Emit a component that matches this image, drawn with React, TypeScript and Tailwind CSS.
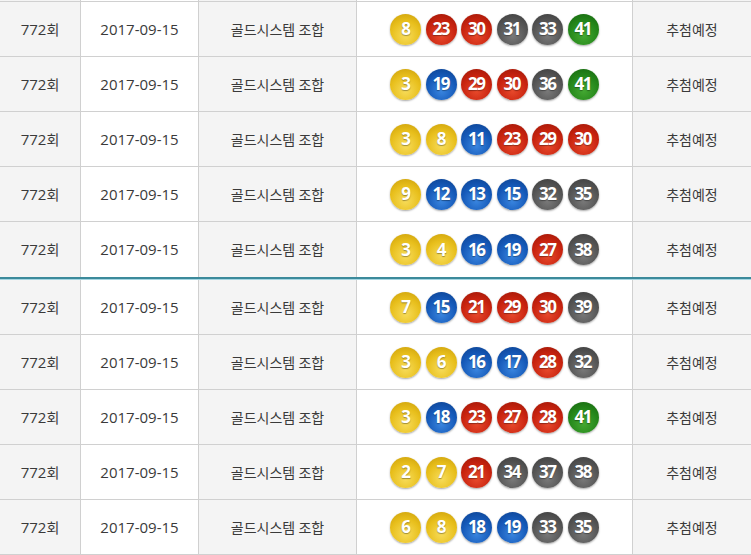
const rows: number[][] = [
  [8, 23, 30, 31, 33, 41],
  [3, 19, 29, 30, 36, 41],
  [3, 8, 11, 23, 29, 30],
  [9, 12, 13, 15, 32, 35],
  [3, 4, 16, 19, 27, 38],
  [7, 15, 21, 29, 30, 39],
  [3, 6, 16, 17, 28, 32],
  [3, 18, 23, 27, 28, 41],
  [2, 7, 21, 34, 37, 38],
  [6, 8, 18, 19, 33, 35],
];

function ballColor(n: number) {
  if (n <= 10)
    return "bg-[radial-gradient(circle_at_50%_70%,#f7dc5a_0%,#e8bf1c_55%,#c99c08_100%)]";
  if (n <= 20)
    return "bg-[radial-gradient(circle_at_50%_70%,#3a86e0_0%,#1559b8_55%,#0b3f8c_100%)]";
  if (n <= 30)
    return "bg-[radial-gradient(circle_at_50%_70%,#e84a2c_0%,#c8230f_55%,#9a1606_100%)]";
  if (n <= 40)
    return "bg-[radial-gradient(circle_at_50%_70%,#7a7a7a_0%,#555555_55%,#3a3a3a_100%)]";
  return "bg-[radial-gradient(circle_at_50%_70%,#44a832_0%,#24861a_55%,#15640e_100%)]";
}

function Ball({ n }: { n: number }) {
  return (
    <span
      className={`flex items-center justify-center w-[31px] h-[31px] rounded-full text-white text-[17px] font-bold tracking-[-1.5px] shadow-[0_1px_2px_rgba(0,0,0,0.35)] [text-shadow:0_1px_1px_rgba(0,0,0,0.35)] ${ballColor(n)}`}
      style={{ fontFamily: '"Open Sans", "Liberation Sans", sans-serif' }}
    >
      <span className="-ml-[1px]">{n}</span>
    </span>
  );
}

function Row({ nums, divider }: { nums: number[]; divider?: boolean }) {
  return (
    <div
      className={`flex h-[55px] ${divider ? "border-b-0" : "border-b border-[#d0d0d0]"}`}
    >
      <div className="w-[81px] border-r border-[#d0d0d0] bg-[#f4f4f4] flex items-center justify-center">
        <span className="text-[15px] font-['Open_Sans']">772</span>
        <span>회</span>
      </div>
      <div className="w-[118px] border-r border-[#d0d0d0] bg-white flex items-center justify-center text-[15px] font-['Open_Sans']">
        2017-09-15
      </div>
      <div className="w-[158px] border-r border-[#d0d0d0] bg-[#f4f4f4] flex items-center justify-center">
        골드시스템 조합
      </div>
      <div className="w-[276px] border-r border-[#d0d0d0] bg-white flex items-center justify-center gap-[4.5px]">
        {nums.map((n, i) => (
          <Ball key={i} n={n} />
        ))}
      </div>
      <div className="flex-1 bg-[#f4f4f4] flex items-center justify-center">
        추첨예정
      </div>
    </div>
  );
}

export default function App() {
  return (
    <div
      className="w-[751px] h-[555px] overflow-hidden bg-white text-[14px] text-[#3a3a3a]"
      style={{ fontFamily: '"Noto Sans CJK KR", "Noto Sans", sans-serif' }}
    >
      <div className="flex h-px">
        <div className="w-[81px] border-r border-[#d0d0d0] bg-[#f4f4f4]" />
        <div className="w-[118px] border-r border-[#d0d0d0]" />
        <div className="w-[158px] border-r border-[#d0d0d0] bg-[#f4f4f4]" />
        <div className="w-[276px] border-r border-[#d0d0d0]" />
        <div className="flex-1 bg-[#f4f4f4]" />
      </div>
      <div className="border-t border-[#d0d0d0]">
        {rows.slice(0, 5).map((r, i) => (
          <Row key={i} nums={r} divider={i === 4} />
        ))}
        <div className="h-[2px] bg-[#3c8a9b]" />
        <div className="h-px bg-[#a6d6e2]" />
        {rows.slice(5).map((r, i) => (
          <Row key={i + 5} nums={r} />
        ))}
      </div>
    </div>
  );
}
